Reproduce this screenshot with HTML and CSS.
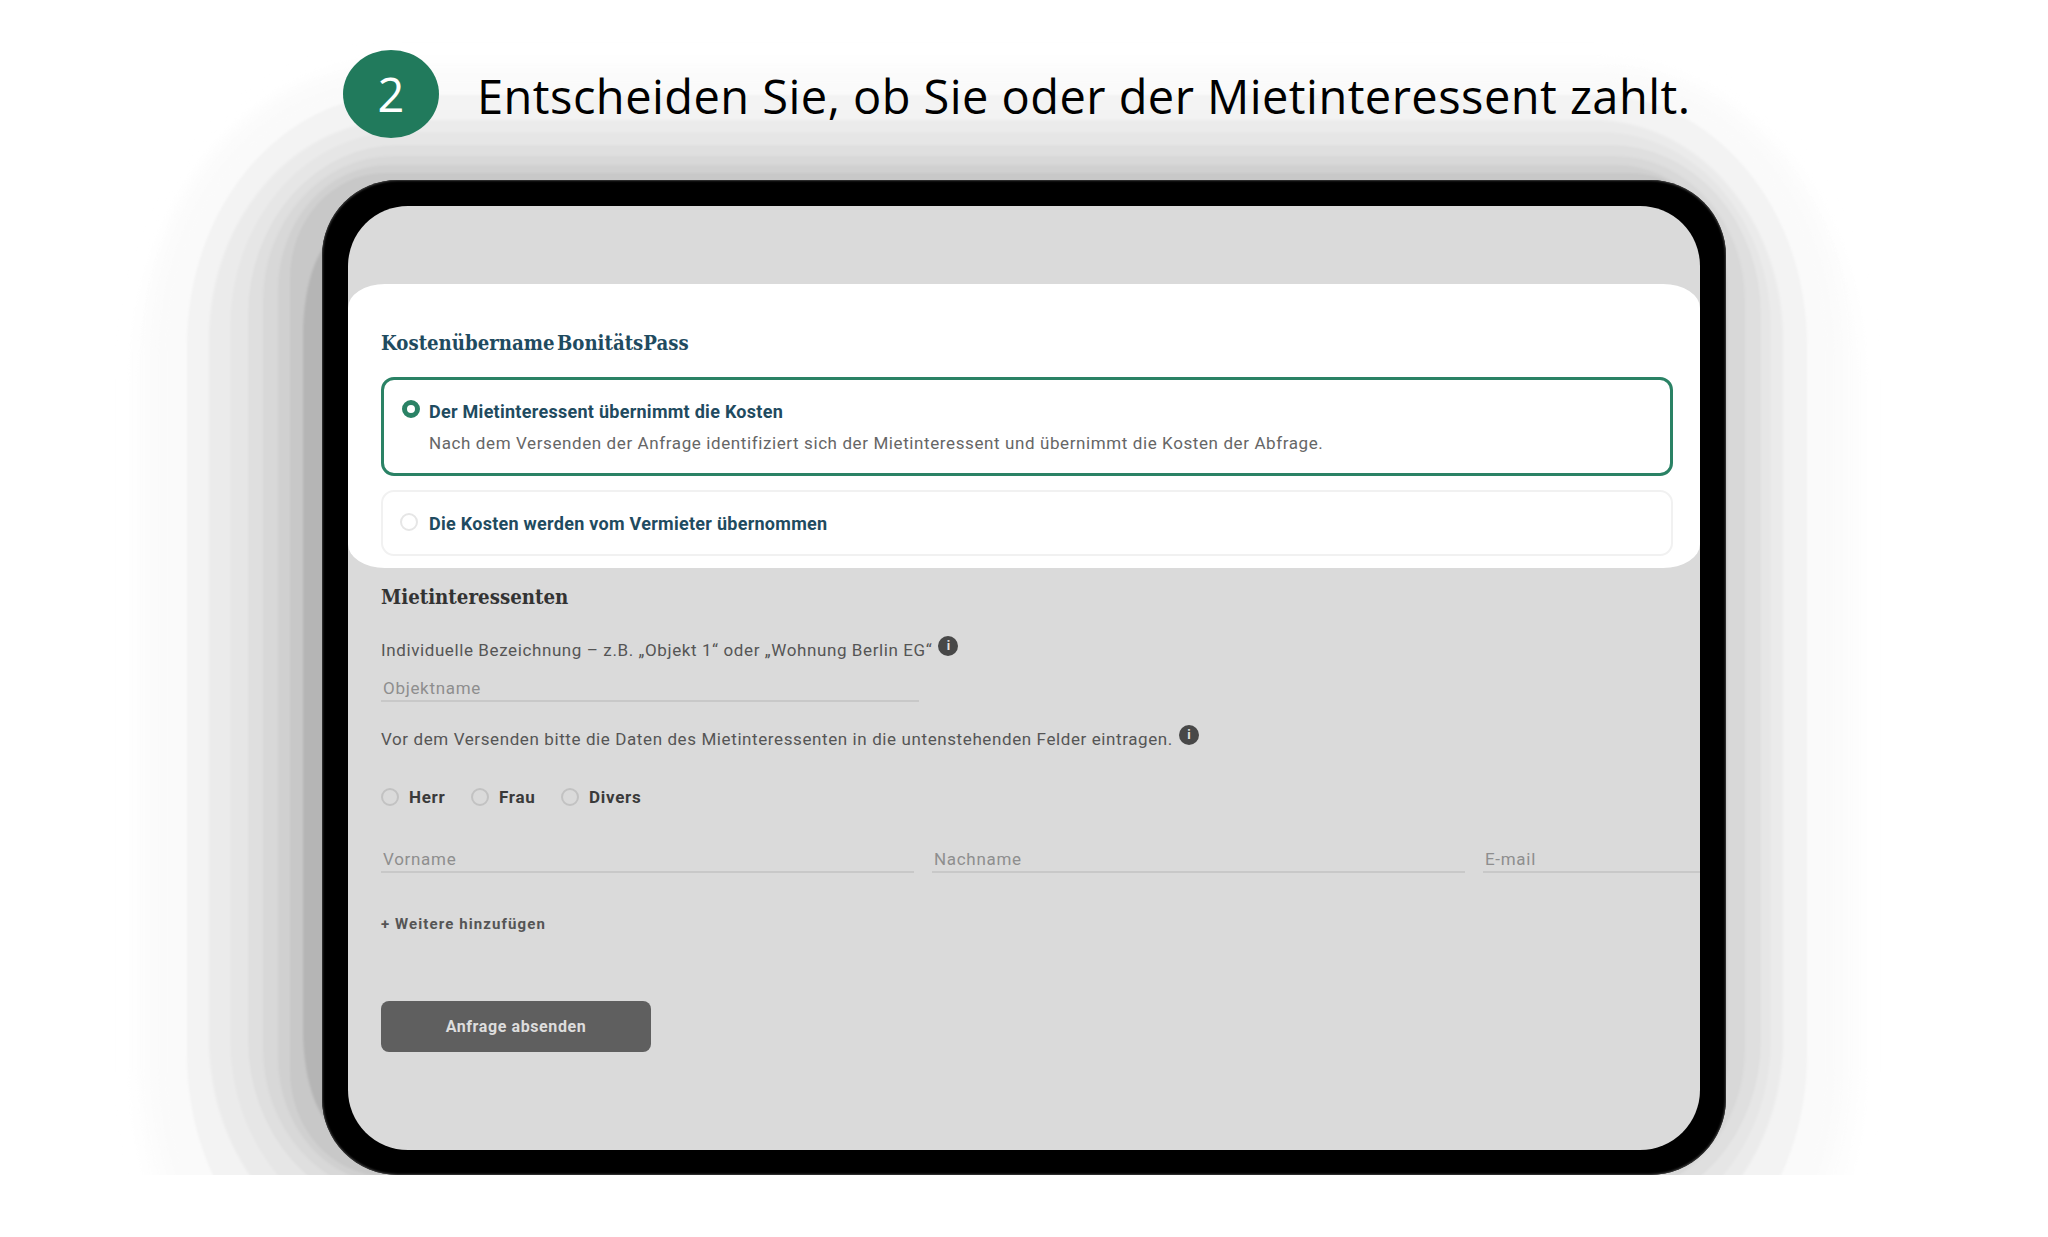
FILE: index.html
```html
<!DOCTYPE html>
<html lang="de">
<head>
    <meta charset="UTF-8">
    <title>Entscheiden Sie, ob Sie oder der Mietinteressent zahlt</title>
    <link rel="stylesheet" href="styles.css">
</head>
<body>
    <div class="stage">
        <!-- stepped drop shadow behind the tablet -->
        <svg class="tablet-shadow" width="2048" height="1175" viewBox="0 0 2048 1175" aria-hidden="true">
            <defs>
                <filter id="soft" x="-5%" y="-5%" width="110%" height="110%">
                    <feGaussianBlur stdDeviation="1.2"/>
                </filter>
                <filter id="softer" x="-5%" y="-5%" width="110%" height="110%">
                    <feGaussianBlur stdDeviation="8"/>
                </filter>
            </defs>
            <rect x="133" y="60" width="1730" height="1331" rx="260" ry="320" fill="#fdfdfd" filter="url(#softer)"/>
            <rect x="150" y="73" width="1693" height="1278" rx="235" ry="280" fill="#fafafa" filter="url(#softer)"/>
            <g filter="url(#soft)">
                <rect x="187" y="95" width="1620" height="1210" rx="210" ry="250" fill="#f3f3f3"/>
                <rect x="209" y="120" width="1574" height="1139" rx="190" ry="220" fill="#ebebeb"/>
                <rect x="230" y="132" width="1541" height="1103" rx="170" ry="195" fill="#e6e6e6"/>
                <rect x="248" y="145" width="1513" height="1065" rx="150" ry="170" fill="#dfdfdf"/>
                <rect x="263" y="156" width="1482" height="1038" rx="130" ry="145" fill="#d8d8d8"/>
                <rect x="278" y="165" width="1450" height="1018" rx="110" ry="125" fill="#d0d0d0"/>
                <rect x="290" y="173" width="1436" height="1003" rx="95" ry="105" fill="#c8c8c8"/>
                <rect x="303" y="235" width="1423" height="895" rx="40" ry="100" fill="#b5b5b5"/>
            </g>
        </svg>

        <div class="step-header">
            <div class="step-number">2</div>
            <div class="step-title">Entscheiden Sie, ob Sie oder der Mietinteressent zahlt.</div>
        </div>

        <div class="tablet">
            <div class="screen">
                <div class="cost-panel">
                    <h2 class="cost-title">Kostenübername BonitätsPass</h2>
                    <div class="option selected">
                        <span class="radio radio-on"></span>
                        <div>
                            <div class="option-name">Der Mietinteressent übernimmt die Kosten</div>
                            <div class="option-text">Nach dem Versenden der Anfrage identifiziert sich der Mietinteressent und übernimmt die Kosten der Abfrage.</div>
                        </div>
                    </div>
                    <div class="option">
                        <span class="radio"></span>
                        <div class="option-name">Die Kosten werden vom Vermieter übernommen</div>
                    </div>
                </div>

                <div class="tenant-section">
                    <h2 class="tenant-title">Mietinteressenten</h2>
                    <div class="hint hint-first">
                        <span class="hint-label">Individuelle Bezeichnung – z.B. „Objekt 1“ oder „Wohnung Berlin EG“</span>
                        <span class="info">i</span>
                    </div>
                    <input class="field field-object" type="text" placeholder="Objektname">
                    <div class="hint hint-second">
                        <span class="hint-label">Vor dem Versenden bitte die Daten des Mietinteressenten in die untenstehenden Felder eintragen.</span>
                        <span class="info">i</span>
                    </div>
                    <div class="salutation">
                        <span class="radio radio-grey"></span><span class="salutation-name">Herr</span>
                        <span class="radio radio-grey"></span><span class="salutation-name">Frau</span>
                        <span class="radio radio-grey"></span><span class="salutation-name">Divers</span>
                    </div>
                    <div class="name-fields">
                        <input class="field" type="text" placeholder="Vorname">
                        <input class="field" type="text" placeholder="Nachname">
                        <input class="field" type="text" placeholder="E-mail">
                    </div>
                    <div class="add-more">+ Weitere hinzufügen</div>
                    <button class="submit-btn">Anfrage absenden</button>
                </div>
            </div>
        </div>
    </div>
</body>
</html>
```

FILE: styles.css
```css
* {
    margin: 0;
    padding: 0;
    box-sizing: border-box;
}

body {
    background: #ffffff;
    font-family: 'Roboto', sans-serif;
}

/* the tablet's shadow stops hard at the bottom of this box */
.stage {
    position: relative;
    height: 1175px;
    overflow: hidden;
    padding-top: 50px;
}

.tablet-shadow {
    position: absolute;
    top: 0;
    left: 0;
}

.step-header {
    position: relative;
    display: flex;
    align-items: center;
    height: 88px;
    margin-left: 343px;
}

.step-number {
    width: 96px;
    height: 88px;
    border-radius: 50%;
    background: #217a5c;
    color: #ffffff;
    font-family: 'Open Sans', sans-serif;
    font-size: 47px;
    line-height: 88px;
    text-align: center;
}

.step-title {
    margin-left: 38px;
    padding-top: 4px;
    color: #000000;
    font-family: 'Open Sans', sans-serif;
    font-size: 47px;
    letter-spacing: 0.45px;
    white-space: nowrap;
}

.tablet {
    position: relative;
    width: 1404px;
    height: 995px;
    margin: 42px 0 0 322px;
    padding: 26px 26px 25px;
    background: #000000;
    border-radius: 76px;
    box-shadow: inset 0 0 2px 1px #3c3c3c;
}

.screen {
    height: 100%;
    overflow: hidden;
    padding-top: 78px;
    background: #dadada;
    border-radius: 60px;
}

.cost-panel {
    padding: 44px 27px 12px 33px;
    background: #ffffff;
    border-radius: 37px / 24px;
}

.cost-title,
.tenant-title {
    font-family: 'DejaVu Serif Condensed', 'DejaVu Serif', serif;
    font-weight: 700;
}

.cost-title {
    margin-bottom: 19px;
    color: #1f4b60;
    font-size: 20.2px;
    line-height: 30px;
    word-spacing: -4px;
}

.option {
    display: flex;
    gap: 11px;
    padding: 20px 20px 18px 17px;
    border: 2px solid #f1f1f1;
    border-radius: 13px;
}

.option.selected {
    gap: 9px;
    margin-bottom: 14px;
    padding: 19px 20px 18px 18px;
    border: 3px solid #2a8265;
}

.radio {
    flex-shrink: 0;
    width: 18px;
    height: 18px;
    margin-top: 1px;
    border: 2px solid #e6e6e6;
    border-radius: 50%;
}

.radio-on {
    border: 5px solid #2a8265;
}

.radio-grey {
    margin-top: 0;
    border-color: #c2c2c2;
}

.option-name {
    color: #1f4b60;
    font-size: 18px;
    font-weight: 700;
    line-height: 24px;
    letter-spacing: 0.27px;
}

.selected .option-name {
    padding-top: 1px;
    margin-bottom: -1px;
}

.option-text {
    margin-top: 8px;
    color: #666666;
    font-size: 17px;
    line-height: 24px;
    letter-spacing: 0.6px;
}

.tenant-section {
    padding: 15px 0 0 33px;
}

.tenant-title {
    color: #333333;
    font-size: 20.3px;
    line-height: 28px;
}

.hint {
    display: flex;
    align-items: center;
    color: #555555;
    font-size: 17px;
    line-height: 24px;
    letter-spacing: 0.6px;
}

.hint-first {
    margin-top: 27px;
}

.hint-second {
    margin-top: 25px;
}

.info {
    width: 20px;
    height: 20px;
    margin: -8px 0 0 6px;
    border-radius: 50%;
    background: #484848;
    color: #e4e4e4;
    font-size: 13px;
    font-weight: 700;
    line-height: 20px;
    letter-spacing: 0;
    text-align: center;
}

.field {
    display: block;
    height: 26px;
    padding-left: 2px;
    background: transparent;
    border: none;
    border-bottom: 2px solid #c8c8c8;
    font-family: 'Roboto', sans-serif;
    font-size: 17px;
    letter-spacing: 0.7px;
}

.field::placeholder {
    color: #8e8e8e;
    opacity: 1;
}

.field-object {
    width: 538px;
    margin-top: 14px;
}

.salutation {
    display: flex;
    align-items: center;
    height: 24px;
    margin-top: 34px;
}

.salutation-name {
    width: 72px;
    padding-left: 10px;
    color: #3a3a3a;
    font-size: 17px;
    font-weight: 700;
    letter-spacing: 0.7px;
}

.name-fields {
    display: grid;
    grid-template-columns: repeat(3, 533px);
    gap: 18px;
    margin-top: 38px;
}

.name-fields .field {
    width: 100%;
}

.add-more {
    margin-top: 41px;
    color: #555555;
    font-size: 15px;
    font-weight: 700;
    line-height: 20px;
    letter-spacing: 1.1px;
}

.submit-btn {
    display: block;
    width: 270px;
    height: 51px;
    margin-top: 67px;
    background: #5f5f5f;
    border: none;
    border-radius: 8px;
    color: #dddddd;
    font-family: 'Roboto', sans-serif;
    font-size: 16px;
    font-weight: 700;
    letter-spacing: 0.6px;
}
```
